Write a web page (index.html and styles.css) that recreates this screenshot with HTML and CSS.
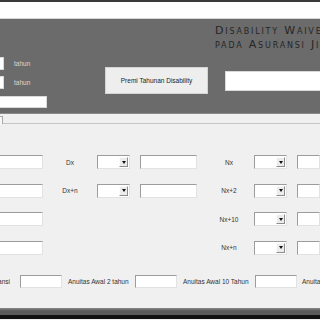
FILE: index.html
```html
<!DOCTYPE html>
<html lang="id">
<head>
  <meta charset="UTF-8" />
  <meta name="viewport" content="width=device-width, initial-scale=1.0" />
  <title>Disability Waiver</title>
  <link rel="stylesheet" href="styles.css">
</head>
<body>
  <div class="titlebar"></div>
  <div class="menustrip"></div>

  <header class="panel">
    <div class="panel-left">
      <div class="age-row">
        <span class="field field-flat field-stub"></span>
        <span class="unit">tahun</span>
      </div>
      <div class="age-row second">
        <span class="field field-flat field-stub"></span>
        <span class="unit">tahun</span>
      </div>
      <div class="age-row third">
        <span class="field field-flat field-wide"></span>
      </div>
    </div>

    <button class="calc-btn">Premi Tahunan Disability</button>

    <div class="panel-right">
      <h1 class="title">Disability Waiver<br>pada Asuransi Jiwa</h1>
      <span class="field field-flat field-result"></span>
    </div>
  </header>

  <div class="tabs">
    <span class="tab"></span>
  </div>

  <main class="page">
    <div class="table">
      <span class="field col-a"></span>
      <span class="label col-b">Dx</span>
      <span class="combo col-c"><span class="combo-btn"><span class="arrow"></span></span></span>
      <span class="field col-d"></span>
      <span class="label col-e">Nx</span>
      <span class="combo col-f"><span class="combo-btn"><span class="arrow"></span></span></span>
      <span class="field col-g"></span>

      <span class="field col-a"></span>
      <span class="label col-b">Dx+n</span>
      <span class="combo col-c"><span class="combo-btn"><span class="arrow"></span></span></span>
      <span class="field col-d"></span>
      <span class="label col-e">Nx+2</span>
      <span class="combo col-f"><span class="combo-btn"><span class="arrow"></span></span></span>
      <span class="field col-g"></span>

      <span class="field col-a"></span>
      <span class="label col-e">Nx+10</span>
      <span class="combo col-f"><span class="combo-btn"><span class="arrow"></span></span></span>
      <span class="field col-g"></span>

      <span class="field col-a"></span>
      <span class="label col-e">Nx+n</span>
      <span class="combo col-f"><span class="combo-btn"><span class="arrow"></span></span></span>
      <span class="field col-g"></span>
    </div>

    <div class="annuity-row">
      <span class="label cut"><span>Asuransi</span></span>
      <span class="field ann-field first"></span>
      <span class="label ann-label l2">Anuitas Awal 2 tahun</span>
      <span class="field ann-field"></span>
      <span class="label ann-label l10">Anuitas Awal 10 Tahun</span>
      <span class="field ann-field"></span>
      <span class="label ann-label last">Anuitas Awal n Tahun</span>
    </div>
  </main>

  <div class="statusbar"></div>
  <div class="taskbar"></div>
</body>
</html>
```

FILE: styles.css
```css
:root {
  --panel: #6b6b6b;
  --face: #f0f0f0;
  --ink: #2e2e2e;
  --edge-dark: #9c9c9c;
  --edge-light: #e2e2e2;
}

* {
  box-sizing: border-box;
}

body {
  margin: 0;
  width: 320px;
  height: 320px;
  overflow: hidden;
  background: var(--face);
  font-family: "Liberation Sans", Arial, sans-serif;
  color: var(--ink);
}

.titlebar {
  height: 2px;
  background: #3a3a3a;
}

.menustrip {
  height: 17px;
  background: #ffffff;
  border-bottom: 1px solid #d6d6d6;
}

/* dark header panel */
.panel {
  height: 95px;
  background: var(--panel);
  display: flex;
  border-bottom: 1px solid #8a8a8a;
}

.panel-left {
  width: 105px;
  flex-shrink: 0;
  padding-top: 38px;
}

.age-row {
  display: flex;
  align-items: center;
  height: 13px;
}

.age-row.second {
  margin-top: 6px;
}

.age-row.third {
  margin-top: 7px;
  height: 12px;
}

.unit {
  margin-left: 10px;
  font-size: 6.5px;
  color: #d8d8d8;
}

.field {
  display: block;
  flex-shrink: 0;
  background: #ffffff;
  border-top: 1px solid var(--edge-dark);
  border-left: 1px solid var(--edge-dark);
  border-right: 1px solid var(--edge-light);
  border-bottom: 1px solid var(--edge-light);
  height: 14px;
}

.field-flat {
  border: 1px solid #d9d9d9;
}

.field-stub {
  width: 4px;
  height: 13px;
  border-left: none;
}

.field-wide {
  width: 47px;
  height: 12px;
  border-left: none;
}

.calc-btn {
  flex-shrink: 0;
  margin-top: 48px;
  width: 103px;
  height: 27px;
  padding: 0;
  background: #eeeeee;
  border: 1px solid #d4d4d4;
  font-family: "Liberation Sans", Arial, sans-serif;
  font-size: 6.5px;
  color: #222;
}

.panel-right {
  margin-left: 7px;
  padding-top: 5px;
  flex: 1;
  min-width: 0;
}

.title {
  margin: 0;
  font-size: 11px;
  line-height: 14px;
  font-weight: normal;
  font-variant: small-caps;
  letter-spacing: 1.8px;
  white-space: nowrap;
  color: #262626;
  font-family: "DejaVu Sans", sans-serif;
}

.field-result {
  margin: 19px 0 0 10px;
  width: 110px;
  height: 20px;
}

/* tab strip */
.tabs {
  height: 10px;
  border-bottom: 1px solid #c6c6c6;
  padding-top: 2px;
}

.tab {
  display: block;
  width: 3px;
  height: 8px;
  border: 1px solid #a9a9a9;
  border-left: none;
  border-bottom: none;
  background: #f7f7f7;
}

.page {
  height: 184px;
  padding-top: 31px;
}

.table {
  display: grid;
  grid-template-columns: 43px 54px 33px 74px 50px 33px 1fr;
  grid-auto-rows: 14px;
  row-gap: 14.5px;
  align-items: center;
}

.label {
  flex-shrink: 0;
  font-size: 6.5px;
  color: #333;
  white-space: nowrap;
}

.col-a { grid-column: 1; border-left: none; }
.col-b { grid-column: 2; justify-self: center; }
.col-c { grid-column: 3; }
.col-d { grid-column: 4; width: 57px; margin-left: 10px; }
.col-e { grid-column: 5; justify-self: center; }
.col-f { grid-column: 6; }
.col-g { grid-column: 7; margin-left: 10px; }

.combo {
  display: flex;
  justify-content: flex-end;
  align-items: center;
  height: 14px;
  background: #ffffff;
  border-top: 1px solid var(--edge-dark);
  border-left: 1px solid var(--edge-dark);
  border-right: 1px solid var(--edge-light);
  border-bottom: 1px solid var(--edge-light);
  padding-right: 1px;
}

.combo-btn {
  display: flex;
  align-items: center;
  justify-content: center;
  width: 9px;
  height: 10px;
  background: #ececec;
  border-right: 1px solid #8d8d8d;
  border-bottom: 1px solid #8d8d8d;
  border-top: 1px solid #fbfbfb;
  border-left: 1px solid #fbfbfb;
}

.arrow {
  width: 0;
  height: 0;
  border-left: 2px solid transparent;
  border-right: 2px solid transparent;
  border-top: 3px solid #111;
}

/* annuity row */
.annuity-row {
  display: flex;
  align-items: center;
  margin-top: 20.5px;
  height: 13px;
}

.cut {
  display: flex;
  justify-content: flex-end;
  width: 10px;
  overflow: hidden;
}

.ann-field {
  width: 42px;
  height: 13px;
}

.ann-field.first {
  margin-left: 10px;
}

.ann-label {
  margin-left: 6px;
}

.l2 {
  width: 67px;
}

.l10 {
  width: 72px;
}

.last {
  margin-left: 5px;
}

.statusbar {
  height: 7px;
  background: linear-gradient(#8a8a8a, #5a5a5a 40%, #5a5a5a);
}

.taskbar {
  height: 4px;
  background: #111;
}
```
